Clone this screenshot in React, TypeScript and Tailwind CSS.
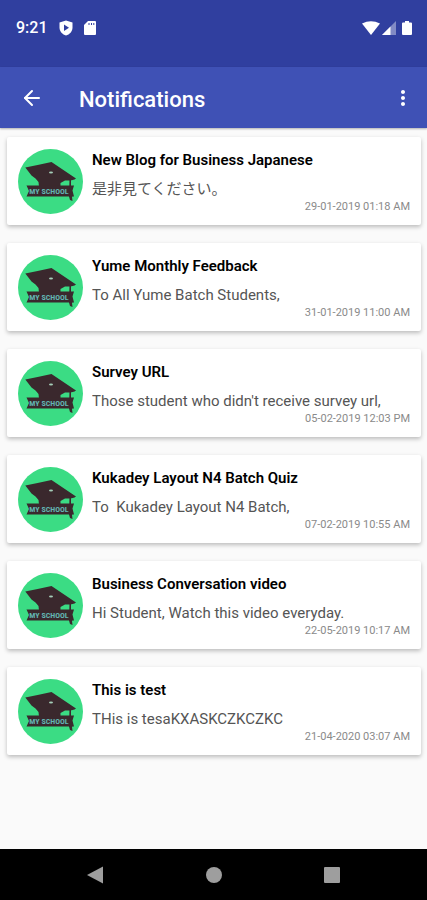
import { ArrowLeft } from 'lucide-react';
import { MdMoreVert } from 'react-icons/md';

interface Notification {
  title: string;
  body: string;
  date: string;
}

const notifications: Notification[] = [
  { title: 'New Blog for Business Japanese', body: '是非見てください。', date: '29-01-2019 01:18 AM' },
  { title: 'Yume Monthly Feedback', body: 'To All Yume Batch Students,', date: '31-01-2019 11:00 AM' },
  { title: 'Survey URL', body: "Those student who didn't receive survey url,", date: '05-02-2019 12:03 PM' },
  { title: 'Kukadey Layout N4 Batch Quiz', body: 'To  Kukadey Layout N4 Batch,', date: '07-02-2019 10:55 AM' },
  { title: 'Business Conversation video', body: 'Hi Student, Watch this video everyday.', date: '22-05-2019 10:17 AM' },
  { title: 'This is test', body: 'THis is tesaKXASKCZKCZKC', date: '21-04-2020 03:07 AM' }
];

function SchoolLogo() {
  return (
    <svg viewBox="0 0 65 65" className="size-[65px] shrink-0" aria-hidden="true">
      <circle cx="32.5" cy="32.5" r="32.5" fill="#3bdc84" />
      <g fill="#3a282d">
        {/* mortarboard and the cap under it */}
        <path d="M7.300 18.500Q20 16 33.500 13L58 29.500Q55 32 47 31.500L42.500 34V37.500H21L20.500 33 17.500 29.500 13.500 26.500Z" />
        {/* ribbon */}
        <path d="M8.500 36.500H56L54.500 41.500 56 47.500H8.500L11 42Z" />
        {/* tassel */}
        <path d="M51.500 30h1.500v14l2 2-1 2 .5 4-2.500-1-1-3.500Z" />
      </g>
      <ellipse cx="33" cy="23.500" rx="2" ry="1" fill="#a5cdb8" />
      <text
        x="31"
        y="45"
        textAnchor="middle"
        fontSize="8"
        fontWeight="700"
        fill="#62b5b2"
        fontFamily="'Liberation Sans Narrow', 'Roboto Condensed', sans-serif"
      >
        MY SCHOOL
      </text>
    </svg>
  );
}

function StatusBar() {
  return (
    <div className="h-[67px] bg-[#303f9f] px-4 pb-3 flex items-center justify-between text-white">
      <div className="flex items-center">
        <span className="text-base font-medium">9:21</span>
        <svg viewBox="0 0 14 16" className="ml-[11px] w-[14px] h-4" aria-hidden="true">
          <path d="M7 0.500 13.500 2.500V7.500C13.500 11.500 10.500 14.500 7 15.500 3.500 14.500 .5 11.500 .5 7.500V2.500Z" fill="currentColor" />
          <path d="M5 4.500 10 7.700 5 11Z" fill="#303f9f" />
        </svg>
        <svg viewBox="0 0 12 14" className="ml-[11px] w-3 h-[14px]" aria-hidden="true">
          <path d="M4 0h7q1 0 1 1v12q0 1-1 1H1q-1 0-1-1V4Z" fill="currentColor" />
          <path d="M4.500 2h1v2h-1zM7 2h1v2H7zM9.300 2h1v2h-1z" fill="#303f9f" />
        </svg>
      </div>
      <div className="flex items-center">
        <svg viewBox="0 0 18 14" className="w-[18px] h-[14px]" aria-hidden="true">
          <path d="M0 2.500Q9-2 18 2.500L9 14Z" fill="currentColor" />
        </svg>
        <svg viewBox="0 0 14 14" className="ml-[2px] size-[14px]" aria-hidden="true">
          <path d="M14 0V14H0Z" fill="currentColor" opacity="0.4" />
          <path d="M8.500 5.500V14H0Z" fill="currentColor" />
        </svg>
        <svg viewBox="0 0 10 14" className="ml-[6px] mr-[-1px] w-[10px] h-[14px]" aria-hidden="true">
          <path d="M3 0h4v1.500h2q1 0 1 1V13q0 1-1 1H1q-1 0-1-1V2.500q0-1 1-1h2Z" fill="currentColor" />
        </svg>
      </div>
    </div>
  );
}

function NotificationCard({ title, body, date }: Notification) {
  return (
    <li className="min-h-[88px] bg-white rounded-[2px] shadow-[0_2px_4px_rgba(0,0,0,0.25)] px-[11px] flex items-center gap-[9px]">
      <SchoolLogo />
      <div className="min-w-0 flex-1 pt-[3px] flex flex-col">
        <h2 className="text-[15px] leading-5 font-semibold text-black truncate">{title}</h2>
        <p className="mt-[9px] text-[15px] leading-5 text-[#555555] whitespace-pre overflow-hidden">{body}</p>
        <time className="self-end text-[11px] leading-4 text-[#8a8a8a]">{date}</time>
      </div>
    </li>
  );
}

export default function App() {
  return (
    <div className="min-h-screen flex flex-col bg-[#fafafa] font-[Roboto,'Noto_Sans_CJK_JP',sans-serif]">
      <StatusBar />
      <header className="h-[61px] bg-[#3f51b5] px-5 flex items-center text-white shadow-[0_1px_2px_rgba(0,0,0,0.3)]">
        <button type="button" aria-label="Back">
          <ArrowLeft size={24} strokeWidth={2} />
        </button>
        <h1 className="ml-[35px] flex-1 pt-1 text-[22px] leading-7 font-medium">Notifications</h1>
        <button type="button" aria-label="More options" className="-mr-2">
          <MdMoreVert size={24} />
        </button>
      </header>

      <main className="flex-1 pl-[7px] pr-[6px] pt-[9px] pb-4">
        <ul className="flex flex-col gap-[18px]">
          {notifications.map((item) => (
            <NotificationCard key={item.date} {...item} />
          ))}
        </ul>
      </main>

      <nav className="h-[51px] bg-black px-[86px] flex items-center justify-between text-[#9e9e9e]">
        <button type="button" aria-label="Back">
          <svg viewBox="0 0 18 18" className="size-[18px]">
            <path d="M1 9 17 .5V17.500Z" fill="currentColor" />
          </svg>
        </button>
        <button type="button" aria-label="Home">
          <svg viewBox="0 0 18 18" className="size-[18px]">
            <circle cx="9" cy="9" r="8" fill="currentColor" />
          </svg>
        </button>
        <button type="button" aria-label="Recent apps">
          <svg viewBox="0 0 18 18" className="size-[18px]">
            <rect x="1" y="1" width="16" height="16" rx="1" fill="currentColor" />
          </svg>
        </button>
      </nav>
    </div>
  );
}
